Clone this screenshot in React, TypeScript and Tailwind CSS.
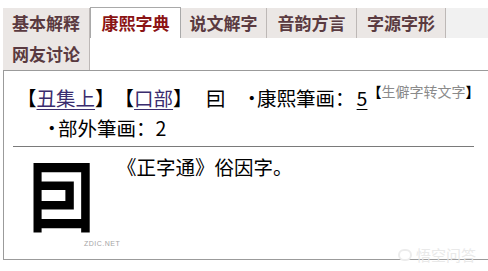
import React from 'react';

const tabs = [
    { label: '基本解释', w: 'w-[87px]' },
    { label: '康熙字典', w: 'w-[91px]', active: true },
    { label: '说文解字', w: 'w-[86px]' },
    { label: '音韵方言', w: 'w-[90px]' },
    { label: '字源字形', w: 'w-[89px]' },
];

function Tab({ label, w, active }: { label: string; w: string; active?: boolean }) {
    if (active) {
        return (
            <div className={`${w} h-[31px] shrink-0 flex items-center justify-center bg-white border-t border-l border-r border-[#a9a9a9] text-[17px] font-bold text-[#8b1414]`}>
                {label}
            </div>
        );
    }
    return (
        <div className={`${w} h-[30px] mt-[1px] shrink-0 flex items-center justify-center bg-[#ebe7e5] border-r border-[#bdb8b6] text-[17px] font-bold text-[#5a3a40]`}>
            {label}
        </div>
    );
}

function Dot({ className = '' }: { className?: string }) {
    return <span className={`inline-block w-[12px] text-center ${className}`}>·</span>;
}

export default function App() {
    return (
        <div className="w-[488px] h-[271px] bg-white overflow-hidden relative font-['Noto_Sans_CJK_SC','Noto_Sans_CJK_JP',sans-serif] text-black [text-spacing-trim:space-all]">
            {/* Tab strip */}
            <div className="pt-[7px] pl-[3px]">
                <div className="flex h-[31px]">
                    {tabs.map((t) => (
                        <Tab key={t.label} {...t} />
                    ))}
                    <div className="flex-1 h-[30px] mt-[1px] bg-[#f1f1f1]" />
                </div>
                <div className="flex h-[32px]">
                    <div className="w-[87px] h-[32px] flex items-center justify-center bg-[#ebe7e5] border-r border-[#bdb8b6] text-[17px] font-bold text-[#5a3a40]">
                        网友讨论
                    </div>
                </div>
            </div>

            {/* Content box */}
            <div className="ml-[3px] h-[190px] border-l border-t border-b border-[#9b9b9b]">
                <div className="pt-[12px] pl-[13px] text-[19.5px] leading-[30px] whitespace-nowrap">
                    <div className="flex items-baseline">
                        <span>【<span className="underline underline-offset-[3px] text-[#3a2c6e]">丑集上</span>】【<span className="underline underline-offset-[3px] text-[#3a2c6e]">口部</span>】</span>
                        <span className="ml-[13.5px]">囙</span>
                        <Dot className="ml-[16.5px]" />
                        <span className="ml-[3px]">康熙筆画：</span>
                        <span className="ml-[2px] underline underline-offset-[3px]">5</span>
                        <span className="self-start text-[14px] leading-[16px]">
                            <span className="font-bold">【</span>
                            <span className="text-[#8a8a8a]">生僻字转文字</span>
                            <span className="font-bold">】</span>
                        </span>
                    </div>
                    <div className="flex items-baseline pl-[25px]">
                        <Dot />
                        <span className="ml-[4px]">部外筆画：2</span>
                    </div>
                </div>
                <div className="ml-[9px] mt-[3px] w-[461px] h-[1px] bg-[#7a7a7a]" />

                <div className="flex mt-[6px]">
                    <div className="w-[113px] pl-[24px] flex flex-col">
                        <span className="text-[78px] leading-[78px] font-bold scale-x-[0.86] origin-left">囙</span>
                        <span className="pl-[56px] mt-[9px] text-[7px] leading-[8px] tracking-[0.5px] text-[#a5a5a5] font-['Liberation_Sans',sans-serif]">ZDIC.NET</span>
                    </div>
                    <div className="pt-[2px] text-[19.5px] leading-[24px]">《正字通》俗因字。</div>
                </div>
            </div>

            {/* watermark */}
            <div className="absolute right-[12px] bottom-[8px] flex items-center gap-[4px] text-[15px] leading-[16px] text-[#e9e9e9]">
                <span className="w-[14px] h-[12px] rounded-full border-2 border-[#ececec]" />
                <span>悟空问答</span>
            </div>
        </div>
    );
}
